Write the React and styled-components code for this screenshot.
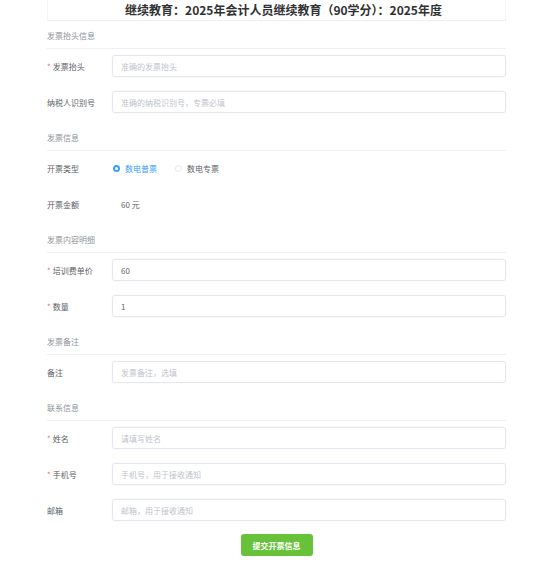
import styled, { createGlobalStyle } from 'styled-components';

const GlobalStyle = createGlobalStyle`
  body {
    margin: 0;
    background: #fff;
    font-family: "Noto Sans CJK SC", "Noto Sans", sans-serif;
  }
`;

const Page = styled.div`
  width: 460px;
  margin: 0 auto;
  padding-right: 1px;
  box-sizing: border-box;
`;

const Header = styled.div`
  height: 21px;
  box-sizing: border-box;
  border: 1px solid #f5f5f5;
  border-top: none;
  border-bottom-color: #eeeeee;
  padding-left: 14px;
  display: flex;
  align-items: center;
  justify-content: center;
`;

const Title = styled.h1`
  margin: 0;
  font-size: 12px;
  font-weight: 700;
  color: #303133;
  line-height: 16px;
`;

const Section = styled.div`
  padding-top: ${p => (p.$first ? '4px' : '0')};
`;

const SectionTitle = styled.div`
  height: 23px;
  line-height: 22px;
  font-size: 8px;
  color: #909399;
  border-bottom: 1px solid #f0f0f0;
  margin-bottom: 6px;
`;

const Row = styled.div`
  display: flex;
  align-items: center;
  height: 22px;
  margin-bottom: 14px;
`;

const Label = styled.div`
  width: 65px;
  flex: none;
  font-size: 8px;
  color: #606266;
  display: flex;
  align-items: center;
`;

const Star = styled.span`
  color: #f56c6c;
  font-size: 8px;
  margin-right: 2px;
`;

const Input = styled.input`
  flex: 1;
  height: 22px;
  box-sizing: border-box;
  border: 1px solid #e4e7ed;
  border-radius: 3px;
  box-shadow: 0 0 2px rgba(0, 0, 0, 0.06);
  padding: 0 8px;
  font-family: inherit;
  font-size: 8px;
  color: #606266;
  outline: none;
  &::placeholder {
    color: #c0c4cc;
  }
`;

const RadioGroup = styled.div`
  display: flex;
  align-items: center;
  gap: 18px;
  padding-left: 1px;
`;

const RadioItem = styled.label`
  display: flex;
  align-items: center;
  gap: 5px;
  font-size: 8px;
  color: ${p => (p.$checked ? '#409eff' : '#606266')};
`;

const Dot = styled.span`
  width: 7px;
  height: 7px;
  border-radius: 50%;
  box-sizing: border-box;
  border: ${p => (p.$checked ? '2px solid #409eff' : '1px solid #e4e7ed')};
  background: #fff;
`;

const Value = styled.div`
  font-size: 8px;
  color: #606266;
  padding-left: 9px;
`;

const Footer = styled.div`
  display: flex;
  justify-content: center;
  margin-top: -1px;
`;

const SubmitButton = styled.button`
  width: 72px;
  height: 22px;
  border: none;
  border-radius: 3px;
  background: #67c23a;
  color: #fff;
  font-family: inherit;
  font-size: 8px;
  font-weight: 700;
  cursor: pointer;
`;

function Field({ label, required, placeholder, value }) {
  return (
    <Row>
      <Label>
        {required && <Star>*</Star>}
        {label}
      </Label>
      <Input placeholder={placeholder} defaultValue={value} />
    </Row>
  );
}

export default function App() {
  return (
    <>
      <GlobalStyle />
      <Page>
        <Header>
          <Title>继续教育：2025年会计人员继续教育（90学分）：2025年度</Title>
        </Header>

        <Section $first>
          <SectionTitle>发票抬头信息</SectionTitle>
          <Field label="发票抬头" required placeholder="准确的发票抬头" />
          <Field label="纳税人识别号" placeholder="准确的纳税识别号，专票必填" />
        </Section>

        <Section>
          <SectionTitle>发票信息</SectionTitle>
          <Row>
            <Label>开票类型</Label>
            <RadioGroup>
              <RadioItem $checked>
                <Dot $checked />
                数电普票
              </RadioItem>
              <RadioItem>
                <Dot />
                数电专票
              </RadioItem>
            </RadioGroup>
          </Row>
          <Row>
            <Label>开票金额</Label>
            <Value>60 元</Value>
          </Row>
        </Section>

        <Section>
          <SectionTitle>发票内容明细</SectionTitle>
          <Field label="培训费单价" required value="60" />
          <Field label="数量" required value="1" />
        </Section>

        <Section>
          <SectionTitle>发票备注</SectionTitle>
          <Field label="备注" placeholder="发票备注，选填" />
        </Section>

        <Section>
          <SectionTitle>联系信息</SectionTitle>
          <Field label="姓名" required placeholder="请填写姓名" />
          <Field label="手机号" required placeholder="手机号，用于接收通知" />
          <Field label="邮箱" placeholder="邮箱，用于接收通知" />
        </Section>

        <Footer>
          <SubmitButton>提交开票信息</SubmitButton>
        </Footer>
      </Page>
    </>
  );
}
